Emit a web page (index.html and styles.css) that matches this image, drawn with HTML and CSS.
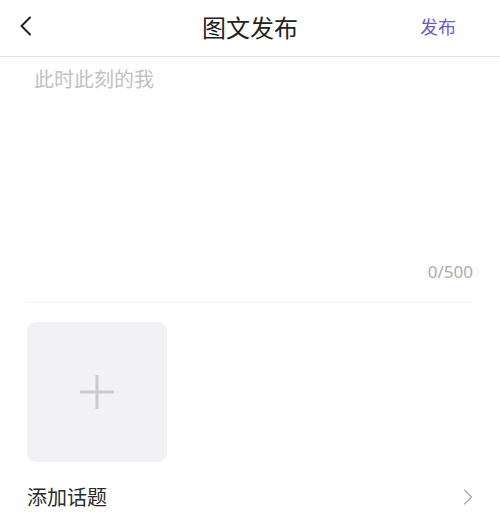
FILE: index.html
```html
<!DOCTYPE html>
<html lang="zh-CN">
<head>
<meta charset="utf-8">
<title>图文发布</title>
<link rel="stylesheet" href="styles.css">
</head>
<body>
<div class="page">
  <header class="header">
    <div class="back">
      <svg width="14" height="20" viewBox="0 0 14 20"><path d="M11 1.5 L2.5 10 L11 18.5" fill="none" stroke="#222" stroke-width="2" stroke-linecap="round" stroke-linejoin="round"/></svg>
    </div>
    <div class="title">图文发布</div>
    <div class="publish">发布</div>
  </header>
  <section class="editor">
    <div class="placeholder">此时此刻的我</div>
    <div class="counter">0/500</div>
  </section>
  <section class="media">
    <div class="upload">
      <svg width="34" height="34" viewBox="0 0 34 34"><path d="M17 0 V34 M0 17 H34" stroke="#cbcbcd" stroke-width="3"/></svg>
    </div>
  </section>
  <div class="topic">
    <span class="topic-label">添加话题</span>
    <svg width="10" height="16" viewBox="0 0 10 16"><path d="M1.5 1 L8.5 8 L1.5 15" fill="none" stroke="#a8a8a8" stroke-width="1.3" stroke-linecap="round" stroke-linejoin="round"/></svg>
  </div>
</div>
</body>
</html>
```

FILE: styles.css
```css
html, body {
  margin: 0;
  padding: 0;
  background: #ffffff;
}
body {
  font-family: "Noto Sans CJK SC", "Noto Sans", sans-serif;
  color: #222;
}
.page {
  width: 500px;
}
.header {
  height: 56px;
  border-bottom: 1px solid #e1e1e1;
  display: grid;
  grid-template-columns: 1fr auto 1fr;
  align-items: center;
}
.back {
  padding-left: 19px;
  display: flex;
  align-items: center;
  margin-top: -4px;
}
.title {
  font-size: 24px;
  line-height: 30px;
  color: #222;
  margin-top: -3px;
}
.publish {
  justify-self: end;
  padding-right: 44px;
  font-size: 18px;
  line-height: 26px;
  color: #6b5cd3;
  margin-top: -4px;
}
.editor {
  margin: 0 27px 0 26px;
  height: 245px;
  border-bottom: 1px solid #f1f1f1;
  display: flex;
  flex-direction: column;
  justify-content: space-between;
}
.placeholder {
  margin-top: 8px;
  padding-left: 8px;
  font-size: 20px;
  line-height: 28px;
  color: #c2c2c2;
}
.counter {
  align-self: flex-end;
  font-family: "Noto Sans", sans-serif;
  font-size: 17px;
  line-height: 24px;
  color: #acacac;
  margin-bottom: 18px;
}
.media {
  padding: 19px 27px 0;
}
.upload {
  width: 140px;
  height: 140px;
  border-radius: 9px;
  background: #f2f2f4;
  display: flex;
  align-items: center;
  justify-content: center;
}
.topic {
  margin: 20px 27px 0;
  display: flex;
  align-items: center;
  justify-content: space-between;
  height: 30px;
}
.topic-label {
  font-size: 20px;
  line-height: 28px;
  color: #2a2a2a;
}
```
